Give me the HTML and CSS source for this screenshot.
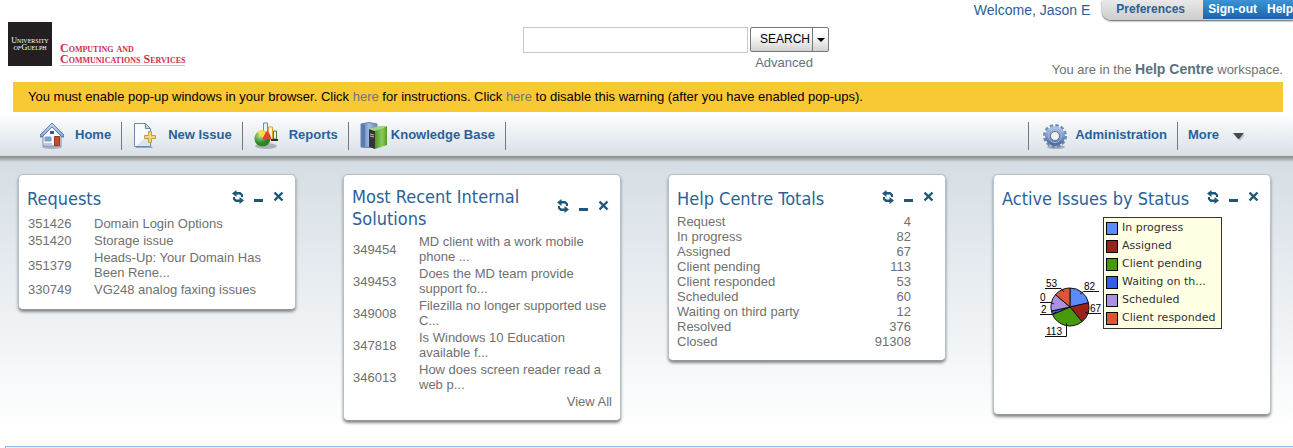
FILE: index.html
```html
<!DOCTYPE html>
<html lang="en">
<head>
<meta charset="utf-8">
<title>Help Centre</title>
<link rel="stylesheet" href="styles.css">
</head>
<body>
<svg class="defs" width="0" height="0" aria-hidden="true">
  <symbol id="refresh" viewBox="0 0 12 14">
    <path d="M0 3.500L4.500 0v2H8.500L11 4.500V7H9V5.500L7.500 4.500H4.500V7zM12 10.500L7.500 14v-2H3.500L1 9.500V7h2v1.500L4.500 9.500h3V7z"/>
  </symbol>
  <symbol id="minimize" viewBox="0 0 10 14"><path d="M0 9h9v3H0z"/></symbol>
  <symbol id="close" viewBox="0 0 10 14"><path d="M.5 2.500l8 8M8.500 2.500l-8 8" fill="none" stroke="currentColor" stroke-width="2.400"/></symbol>
</svg>

<header class="header">
  <div class="brand">
    <div class="crest"><span>University</span><span><i>of</i>Guelph</span></div>
    <div class="department"><span>Computing and</span><span>Communications Services</span></div>
  </div>
  <form class="search">
    <div class="search-row">
      <input class="search-box" type="text" aria-label="Search">
      <div class="search-buttons">
        <button class="search-go" type="button">SEARCH</button>
        <button class="search-more" type="button" aria-label="Search options"><svg width="8" height="4"><path d="M0 0h8L4 4z"/></svg></button>
      </div>
    </div>
    <a class="advanced" href="#">Advanced</a>
  </form>
  <div class="account">
    <div class="account-row">
      <span class="welcome">Welcome, Jason E</span>
      <nav class="account-links">
        <a class="preferences" href="#">Preferences</a>
        <span class="session"><a href="#">Sign-out</a><a href="#">Help</a></span>
      </nav>
    </div>
    <p class="workspace">You are in the <b>Help Centre</b> workspace.</p>
  </div>
</header>

<p class="warning">You must enable pop-up windows in your browser. Click <a href="#">here</a> for instructions. Click <a href="#">here</a> to disable this warning (after you have enabled pop-ups).</p>

<nav class="nav">
  <a class="nav-item" href="#">
    <svg width="24" height="28" viewBox="0 0 24 28">
      <defs><linearGradient id="roof" x2="0" y2="1"><stop stop-color="#c5dbfa"/><stop offset="1" stop-color="#7ba0e0"/></linearGradient></defs>
      <ellipse cx="12" cy="25" rx="10" ry="2" fill="#8d969d" opacity=".6"/>
      <path d="M3 13L12 4l9 9v11H3z" fill="#f7f9ff" stroke="#6f86ae"/>
      <path d="M12 1L0 13v2h2l10-10 10 10h2v-2z" fill="url(#roof)" stroke="#4c669a" stroke-width=".8"/>
      <path d="M10 9h4v3h-4z" fill="#3158a2"/><path d="M5 15h6v4H5z" fill="#7a9edb" stroke="#8a9cc0"/><path d="M14.500 14.500h5v9h-5z" fill="#c5502a" stroke="#8e3c20"/><path d="M4 21h8v2H4z" fill="#bcc9da"/>
    </svg>
    <span>Home</span>
  </a>
  <a class="nav-item" href="#">
    <svg width="24" height="28" viewBox="0 0 24 28">
      <path d="M2 24h16l2 2H3z" fill="#9da7ae"/>
      <path d="M1.500 1.500h11l5 5v18h-16z" fill="#f7faff" stroke="#7089ad"/>
      <path d="M12.500 1.500v5h5z" fill="#c6d5ea" stroke="#7089ad"/>
      <path d="M3 24L17 12v12z" fill="#d5e4f6"/>
      <path d="M15.500 9.500h3v4h4v3h-4v4h-3v-4h-4v-3h4z" fill="#f4d777" stroke="#c09c45"/>
    </svg>
    <span>New Issue</span>
  </a>
  <a class="nav-item" href="#">
    <svg width="24" height="28" viewBox="0 0 24 28">
      <defs><radialGradient id="ball" cx=".35" cy=".3"><stop stop-color="#b6e69a"/><stop offset="1" stop-color="#2f8428"/></radialGradient></defs>
      <ellipse cx="12" cy="24" rx="11" ry="3" fill="#858e94" opacity=".6"/>
      <path d="M9.500 1h4v14h-4z" fill="#e9f0ff" stroke="#6588c8"/><path d="M14.500 5h4v12h-4z" fill="#fff4cf" stroke="#e1a12a"/><path d="M19.500 9h3v8h-3z" fill="#e8f7df" stroke="#3f843b"/><path d="M17 17h7v2h-7z" fill="#333"/>
      <circle cx="8.500" cy="16.500" r="8" fill="url(#ball)"/>
      <path d="M9 17L3 10q4-3 9-1z" fill="#ffdc3d"/><path d="M8 17l5-8q4 3 4 8z" fill="#e34335"/>
    </svg>
    <span>Reports</span>
  </a>
  <a class="nav-item books" href="#">
    <svg width="28" height="28" viewBox="0 0 28 28">
      <defs><linearGradient id="blue"><stop stop-color="#4c6fae"/><stop offset=".5" stop-color="#a3bbe4"/><stop offset="1" stop-color="#6585bd"/></linearGradient><linearGradient id="green"><stop stop-color="#4e982b"/><stop offset=".6" stop-color="#8acb5a"/><stop offset="1" stop-color="#4c9b2b"/></linearGradient></defs>
      <path d="M1 2q8-3 16 0v21q-8 4-16 2z" fill="url(#blue)" stroke="#6a83ad"/><path d="M4 3v22" stroke="#46669d"/>
      <path d="M9 7l6 2v18l-6-2z" fill="#343434"/><path d="M10 12l4 1M10 14l4 1" stroke="#bbb"/>
      <path d="M15 9l12-5v19l-12 4z" fill="url(#green)"/><path d="M9 7l10-3 8 0-12 5z" fill="#9ed67b"/>
    </svg>
    <span>Knowledge Base</span>
  </a>
  <a class="nav-item admin" href="#">
    <svg width="24" height="28" viewBox="0 0 24 28">
      <defs><linearGradient id="gear" x2="0" y2="1"><stop stop-color="#a9c1e4"/><stop offset="1" stop-color="#506fa7"/></linearGradient></defs>
      <ellipse cx="13" cy="25" rx="9" ry="2" fill="#7f8992" opacity=".6"/>
      <circle cx="12" cy="14" r="10.500" fill="none" stroke="#7289b0" stroke-width="3" stroke-dasharray="3.300 2.200"/>
      <circle cx="12" cy="14" r="7.300" fill="none" stroke="url(#gear)" stroke-width="5.500"/>
      <circle cx="12" cy="14" r="6.500" fill="none" stroke="#a3b9dc"/>
      <circle cx="12" cy="14" r="4.500" fill="#eef2f7" stroke="#69727f"/>
    </svg>
    <span>Administration</span>
  </a>
  <a class="nav-item more" href="#">
    <span>More</span>
    <svg width="12" height="10" viewBox="0 0 12 10"><path d="M2 4h10L7 10z" fill="#c0c5c9"/><path d="M0 2h11L6 8H5z" fill="#464a52"/></svg>
  </a>
</nav>

<main class="dashboard">
  <section class="card">
    <div class="card-head"><h2>Requests</h2>
      <div class="tools"><button type="button" aria-label="Refresh"><svg width="12" height="14"><use href="#refresh"/></svg></button><button type="button" aria-label="Minimize"><svg width="10" height="14"><use href="#minimize"/></svg></button><button type="button" aria-label="Close"><svg width="10" height="14"><use href="#close"/></svg></button></div>
    </div>
    <table class="issues">
      <tr><td>351426</td><td>Domain Login Options</td></tr>
      <tr><td>351420</td><td>Storage issue</td></tr>
      <tr><td>351379</td><td>Heads-Up: Your Domain Has Been Rene...</td></tr>
      <tr><td>330749</td><td>VG248 analog faxing issues</td></tr>
    </table>
  </section>

  <section class="card">
    <div class="card-head"><h2>Most Recent Internal Solutions</h2>
      <div class="tools"><button type="button" aria-label="Refresh"><svg width="12" height="14"><use href="#refresh"/></svg></button><button type="button" aria-label="Minimize"><svg width="10" height="14"><use href="#minimize"/></svg></button><button type="button" aria-label="Close"><svg width="10" height="14"><use href="#close"/></svg></button></div>
    </div>
    <table class="issues">
      <tr><td>349454</td><td>MD client with a work mobile phone ...</td></tr>
      <tr><td>349453</td><td>Does the MD team provide support fo...</td></tr>
      <tr><td>349008</td><td>Filezilla no longer supported use C...</td></tr>
      <tr><td>347818</td><td>Is Windows 10 Education available f...</td></tr>
      <tr><td>346013</td><td>How does screen reader read a web p...</td></tr>
    </table>
    <a class="view-all" href="#">View All</a>
  </section>

  <section class="card">
    <div class="card-head"><h2>Help Centre Totals</h2>
      <div class="tools"><button type="button" aria-label="Refresh"><svg width="12" height="14"><use href="#refresh"/></svg></button><button type="button" aria-label="Minimize"><svg width="10" height="14"><use href="#minimize"/></svg></button><button type="button" aria-label="Close"><svg width="10" height="14"><use href="#close"/></svg></button></div>
    </div>
    <table class="totals">
      <tr><td>Request</td><td>4</td></tr>
      <tr><td>In progress</td><td>82</td></tr>
      <tr><td>Assigned</td><td>67</td></tr>
      <tr><td>Client pending</td><td>113</td></tr>
      <tr><td>Client responded</td><td>53</td></tr>
      <tr><td>Scheduled</td><td>60</td></tr>
      <tr><td>Waiting on third party</td><td>12</td></tr>
      <tr><td>Resolved</td><td>376</td></tr>
      <tr><td>Closed</td><td>91308</td></tr>
    </table>
  </section>

  <section class="card">
    <div class="card-head"><h2>Active Issues by Status</h2>
      <div class="tools"><button type="button" aria-label="Refresh"><svg width="12" height="14"><use href="#refresh"/></svg></button><button type="button" aria-label="Minimize"><svg width="10" height="14"><use href="#minimize"/></svg></button><button type="button" aria-label="Close"><svg width="10" height="14"><use href="#close"/></svg></button></div>
    </div>
    <div class="chart">
      <svg class="pie" width="64" height="64" viewBox="0 0 64 64">
        <g stroke="#111" stroke-width="1">
          <path d="M31 31V12A19 19 0 0 1 49.500 26.800z" fill="#5b8cff"/>
          <path d="M31 31L49.500 26.800A19 19 0 0 1 43 45.700z" fill="#99231c"/>
          <path d="M31 31L43 45.700A19 19 0 0 1 13.500 38.500z" fill="#479a0c"/>
          <path d="M31 31L13.500 38.500A19 19 0 0 1 12.400 35z" fill="#335eea"/>
          <path d="M31 31L12.400 35A19 19 0 0 1 16.500 18.700z" fill="#ae90e2"/>
          <path d="M31 31L16.500 18.700A19 19 0 0 1 31 12z" fill="#dc5535"/>
        </g>
        <path d="M60 15.500H44.500L41 18M62 37.500H49L46 36M6 60.500H27.500V47M1 38.500H13.500L17 36M1 26.500H12L15 28M6 12.500H22L25 16" fill="none" stroke="#111"/>
        <g class="pie-labels">
          <text x="45" y="14">82</text><text x="51" y="36">67</text><text x="7" y="59">113</text><text x="2" y="37">2</text><text x="1" y="25">0</text><text x="7" y="11">53</text>
        </g>
      </svg>
      <ul class="legend">
        <li><i class="swatch progress"></i>In progress</li>
        <li><i class="swatch assigned"></i>Assigned</li>
        <li><i class="swatch pending"></i>Client pending</li>
        <li><i class="swatch waiting"></i>Waiting on th...</li>
        <li><i class="swatch scheduled"></i>Scheduled</li>
        <li><i class="swatch responded"></i>Client responded</li>
      </ul>
    </div>
  </section>
</main>
<div class="panel-edge"></div>
</body>
</html>
```

FILE: styles.css
```css
* { box-sizing: border-box; }
body {
  margin: 0;
  min-height: 100vh;
  display: flex;
  flex-direction: column;
  background: #fff;
  color: #707070;
  font: 13px/15px "Liberation Sans", Arial, sans-serif;
}
a { color: inherit; text-decoration: none; }
button { margin: 0; padding: 0; border: 0; background: none; color: inherit; font: inherit; }
svg { display: block; }
.defs { display: none; }

.header {
  display: grid;
  grid-template-columns: minmax(0, 523fr) auto minmax(0, 464fr);
  min-height: 82px;
}
.brand { display: flex; align-items: flex-start; gap: 8px; padding: 22px 0 0 8px; }
.crest {
  display: flex;
  flex-direction: column;
  align-items: center;
  justify-content: center;
  width: 44px;
  height: 44px;
  background: #231f20;
  color: #fff;
  font: 8px/7px "Liberation Serif", serif;
  font-variant: small-caps;
}
.department {
  display: flex;
  flex-direction: column;
  margin-top: 21px;
  border-bottom: 1px solid #c4c4c4;
  color: #cf2d50;
  font: bold 12px/11px "Liberation Serif", serif;
  font-variant: small-caps;
}
.search { padding-top: 27px; }
.search-row { display: flex; gap: 2px; }
.search-box { width: 225px; height: 26px; border: 1px solid #c8c8c8; background: #fff; }
.search-buttons {
  display: flex;
  height: 25px;
  border: 1px solid #777;
  border-radius: 2px;
  background: linear-gradient(#fff 30%, #d2d2d2);
  color: #000;
  font-size: 12px;
}
.search-go { width: 61px; padding-left: 7px; }
.search-more { display: flex; align-items: center; justify-content: center; width: 16px; border-left: 1px solid #777; }
.advanced { display: block; margin: 2px 16px 0 0; color: #62727c; text-align: right; }

.account { display: flex; flex-direction: column; justify-content: space-between; align-items: flex-end; }
.account-row { display: flex; gap: 12px; }
.welcome { padding-top: 2px; color: #2a5f95; font-size: 14px; line-height: 16px; }
.account-links {
  display: flex;
  height: 20px;
  border-bottom-left-radius: 9px;
  background: linear-gradient(#e9e9e9, #ccc);
  box-shadow: 0 1px 2px #555;
  font-size: 12px;
  font-weight: bold;
  line-height: 18px;
}
.preferences { width: 101px; padding-left: 14px; color: #2a5f95; }
.session { display: flex; gap: 10px; height: 19px; padding-left: 5px; background: linear-gradient(#3c93d6, #1d63a8); color: #fff; }
.workspace { margin: 0; padding: 0 10px 5px 0; }
.workspace b { color: #5a7280; font-size: 14px; }

.warning { margin: 0 10px 0 13px; padding: 7px 15px 8px; background: #f9c933; color: #000; }
.warning a { color: #6a7780; }

.nav {
  display: flex;
  align-items: center;
  height: 44px;
  padding: 4px 0 0 29px;
  background: linear-gradient(#fff, #d8e0e7);
  color: #27619c;
  font-weight: bold;
}
.nav-item { display: flex; align-items: center; gap: 11px; height: 28px; padding: 0 10px 0 11px; border-right: 1px solid #777; }
.nav-item span { padding-bottom: 3px; }
.books { gap: 3px; }
.admin { gap: 8px; margin-left: auto; padding-left: 14px; border-left: 1px solid #777; }
.more { gap: 14px; padding: 0 48px 0 10px; border: 0; }

.dashboard {
  flex: 1;
  display: grid;
  grid-template-columns: repeat(4, minmax(0, 1fr));
  align-items: start;
  gap: 47px;
  padding: 18px 22px 24px 18px;
  background: linear-gradient(#888, #b5babd 4px, #d5dee5 6px, #fff 275px);
}
.card {
  padding: 11px 8px;
  border: 1px solid #b2c0ca;
  border-bottom-color: #8d979f;
  border-radius: 5px;
  background: #fff;
  box-shadow: 0 2px 3px #888;
}
.card-head { display: flex; align-items: center; min-height: 26px; }
.card-head h2 { flex: 1; margin: 0; color: #2a6299; font: 18px/22px "DejaVu Sans Condensed", Tahoma, "DejaVu Sans", sans-serif; }
.tools { display: flex; gap: 10px; padding: 0 3px 4px 0; color: #1d587b; }
.tools svg { fill: currentColor; }
table { width: 100%; border-collapse: collapse; }
td { padding: 0; }
.issues { margin-top: 3px; }
.issues td { padding: 1px 0; }
.issues td:first-child { width: 67px; padding-left: 1px; }
.totals { margin-top: 2px; }
.totals td:last-child { padding-right: 26px; text-align: right; }
.view-all { display: block; padding-top: 1px; text-align: right; }

.chart { display: flex; align-items: flex-start; gap: 0; min-height: 191px; padding: 5px 0 0 37px; }
.pie { flex: none; margin-top: 59px; }
.pie-labels { fill: #000; font-size: 10px; }
.legend {
  flex: none;
  margin: 0;
  padding: 1px 5px 1px 2px;
  border: 1px solid #35352a;
  background: #ffffe3;
  color: #333;
  font: 11px/18px "DejaVu Sans", sans-serif;
  list-style: none;
}
.legend li { display: flex; align-items: center; gap: 4px; }
.swatch { width: 12px; height: 13px; border: 1px solid #000; }
.progress { background: #5b8cff; }
.assigned { background: #99231c; }
.pending { background: #479a0c; }
.waiting { background: #335eea; }
.scheduled { background: #ae90e2; }
.responded { background: #dc5535; }

.panel-edge { height: 2px; margin-left: 5px; border-top: 1px solid #98bbe5; border-left: 1px solid #98bbe5; background: #e7eef6; }
```
